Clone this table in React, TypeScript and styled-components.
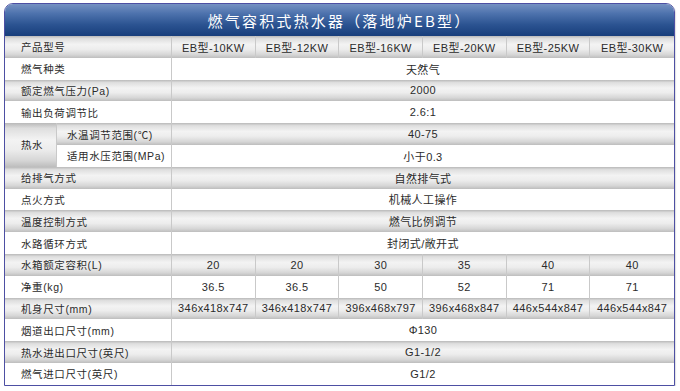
import React from "react";
import styled, { createGlobalStyle, css } from "styled-components";

const GlobalStyle = createGlobalStyle`
  html, body { margin: 0; padding: 0; background: #ffffff; }
  body { font-family: "Liberation Sans", Arial, "Noto Sans CJK SC", sans-serif; }
`;

const Page = styled.div`
  padding: 3px 5px 0 4px;
  width: 671px;
`;

const Table = styled.div`
  display: grid;
  grid-template-columns: 52px 115px repeat(6, 1fr);
  grid-template-rows: 32px;
  grid-auto-rows: 21.8px;
  border: 1px solid #4d4fa3;
  border-radius: 9px 9px 0 0;
  overflow: hidden;
  box-shadow: 1px 1px 1px rgba(0, 0, 0, 0.12);
  color: #2b2b2b;
`;

const Header = styled.div`
  grid-column: 1 / -1;
  display: flex;
  align-items: center;
  justify-content: center;
  background: linear-gradient(
    to bottom,
    #7591c2 0%,
    #4d72ad 30%,
    #2b5391 65%,
    #183e7b 100%
  );
  color: #ffffff;
  font-family: "Noto Sans CJK SC", "Liberation Sans", sans-serif;
  font-size: 15px;
  letter-spacing: 2.2px;
  padding-top: 1px;
`;

const grayBg = css`
  background: linear-gradient(
    to bottom,
    #b9b9b9 0%,
    #dedede 12%,
    #f3f3f3 38%,
    #ededed 60%,
    #d6d6d6 85%,
    #bdbdbd 100%
  );
`;

type Tone = "gray" | "white";

const Cell = styled.div<{
  $tone: Tone;
  $span?: number;
  $rows?: number;
  $align?: "left" | "center";
  $pad?: number;
  $last?: boolean;
}>`
  grid-column: span ${(p) => p.$span ?? 1};
  grid-row: span ${(p) => p.$rows ?? 1};
  display: flex;
  align-items: center;
  justify-content: ${(p) => (p.$align === "left" ? "flex-start" : "center")};
  padding-left: ${(p) => p.$pad ?? 0}px;
  font-family: "Liberation Sans", Arial, "Noto Sans CJK SC", sans-serif;
  font-size: 11px;
  letter-spacing: 0.4px;
  white-space: nowrap;
  border-right: ${(p) => (p.$last ? "none" : "1px solid #c9c9c9")};
  ${(p) => (p.$tone === "gray" ? grayBg : "background: #ffffff;")}
`;

const Label = styled.span`
  font-size: 10.5px;
  letter-spacing: 0.6px;
`;

const models = ["EB型-10KW", "EB型-12KW", "EB型-16KW", "EB型-20KW", "EB型-25KW", "EB型-30KW"];

type Row =
  | { label: string; values: string[] }
  | { label: string; value: string };

const rowsTop: Row[] = [
  { label: "产品型号", values: models },
  { label: "燃气种类", value: "天然气" },
  { label: "额定燃气压力(Pa)", value: "2000" },
  { label: "输出负荷调节比", value: "2.6:1" },
];

const hotWater = [
  { label: "水温调节范围(℃)", value: "40-75" },
  { label: "适用水压范围(MPa)", value: "小于0.3" },
];

const rowsBottom: Row[] = [
  { label: "给排气方式", value: "自然排气式" },
  { label: "点火方式", value: "机械人工操作" },
  { label: "温度控制方式", value: "燃气比例调节" },
  { label: "水路循环方式", value: "封闭式/敞开式" },
  { label: "水箱额定容积(L)", values: ["20", "20", "30", "35", "40", "40"] },
  { label: "净重(kg)", values: ["36.5", "36.5", "50", "52", "71", "71"] },
  {
    label: "机身尺寸(mm)",
    values: ["346x418x747", "346x418x747", "396x468x797", "396x468x847", "446x544x847", "446x544x847"],
  },
  { label: "烟道出口尺寸(mm)", value: "Φ130" },
  { label: "热水进出口尺寸(英尺)", value: "G1-1/2" },
  { label: "燃气进口尺寸(英尺)", value: "G1/2" },
];

function renderRow(row: Row, tone: Tone, key: string) {
  return (
    <React.Fragment key={key}>
      <Cell $tone={tone} $span={2} $align="left" $pad={16}>
        <Label>{row.label}</Label>
      </Cell>
      {"values" in row ? (
        row.values.map((v, i) => (
          <Cell key={i} $tone={tone} $last={i === row.values.length - 1}>
            {v}
          </Cell>
        ))
      ) : (
        <Cell $tone={tone} $span={6} $last>
          {row.value}
        </Cell>
      )}
    </React.Fragment>
  );
}

export default function App() {
  return (
    <>
      <GlobalStyle />
      <Page>
        <Table>
          <Header>燃气容积式热水器（落地炉EB型）</Header>
          {rowsTop.map((r, i) => renderRow(r, i % 2 === 0 ? "gray" : "white", `t${i}`))}
          <Cell $tone="gray" $rows={2} $align="left" $pad={16}>
            <Label>热水</Label>
          </Cell>
          <Cell $tone="gray" $align="left" $pad={10}>
            <Label>{hotWater[0].label}</Label>
          </Cell>
          <Cell $tone="gray" $span={6} $last>
            {hotWater[0].value}
          </Cell>
          <Cell $tone="white" $align="left" $pad={10}>
            <Label>{hotWater[1].label}</Label>
          </Cell>
          <Cell $tone="white" $span={6} $last>
            {hotWater[1].value}
          </Cell>
          {rowsBottom.map((r, i) => renderRow(r, i % 2 === 0 ? "gray" : "white", `b${i}`))}
        </Table>
      </Page>
    </>
  );
}
